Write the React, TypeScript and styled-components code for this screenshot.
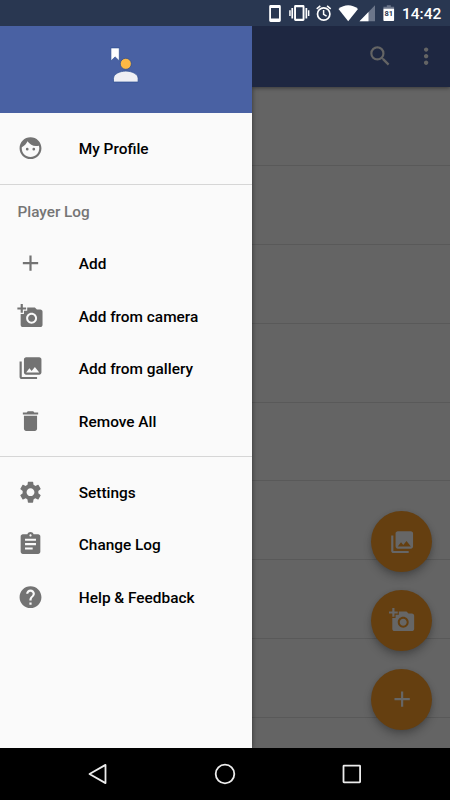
import React from 'react';
import styled, { createGlobalStyle } from 'styled-components';
import {
  MdFace,
  MdAdd,
  MdAddAPhoto,
  MdCollections,
  MdDelete,
  MdSettings,
  MdAssignment,
  MdHelp,
  MdSearch,
  MdMoreVert,
} from 'react-icons/md';

const GlobalStyle = createGlobalStyle`
  * { box-sizing: border-box; }
  body { margin: 0; background: #000; font-family: Roboto, "Liberation Sans", sans-serif; }
`;

const Device = styled.div`
  width: 450px;
  height: 800px;
  display: flex;
  flex-direction: column;
  overflow: hidden;
  background: #000;
`;

const StatusBar = styled.header`
  height: 26px;
  flex: none;
  background: #293751;
  color: #fff;
  display: flex;
  justify-content: flex-end;
  position: relative;
  z-index: 2;
`;

const StatusIcons = styled.svg`
  width: 134px;
  height: 26px;
  flex: none;
`;

const BatteryLevel = styled.text`
  font: 700 7.5px Roboto, sans-serif;
  fill: #293751;
`;

const Clock = styled.time`
  width: 48px;
  font-size: 15.5px;
  font-weight: 500;
  line-height: 28px;
`;

const Screen = styled.main`
  height: 722px;
  flex: none;
  display: flex;
`;

const Drawer = styled.nav`
  width: 252px;
  flex: none;
  background: #fafafa;
  z-index: 1;
  box-shadow: 0 0 5px rgba(0, 0, 0, 0.5);
`;

const DrawerHeader = styled.div`
  height: 87.45px;
  background: #4961a3;
  padding: 18px 0 0 107px;
`;

const Logo = styled.svg`
  display: block;
  width: 36px;
  height: 44px;
`;

const Group = styled.ul`
  list-style: none;
  margin: 0;
  padding: 8.85px 0 8.8px;

  & + & {
    border-top: 1px solid #d6d6d6;
  }
`;

const GroupTitle = styled.li`
  height: 52.5px;
  margin-top: -8.85px;
  padding-left: 17.5px;
  font-size: 15.3px;
  font-weight: 500;
  line-height: 54px;
  color: #757575;
`;

const MenuItem = styled.li`
  height: 52.5px;
  padding-left: 17px;
  display: flex;
  align-items: center;
  gap: 34.8px;
  font-size: 15.4px;
  font-weight: 500;
  color: #000;

  svg {
    width: 27px;
    height: 26.25px;
    flex: none;
    color: #737373;
  }
`;

const Label = styled.span`
  line-height: 20px;
  padding-top: 1.5px;
`;

const Content = styled.section`
  flex: 1;
  position: relative;
  display: flex;
  flex-direction: column;
  background: #646464;
  overflow: hidden;
`;

const AppBar = styled.div`
  height: 61px;
  flex: none;
  display: flex;
  align-items: center;
  justify-content: flex-end;
  gap: 20px;
  padding-right: 11px;
  background: #1e2741;
  color: #646464;
  box-shadow: 0 1px 4px rgba(0, 0, 0, 0.45);
  z-index: 1;

  svg {
    width: 26.25px;
    height: 26.25px;
  }
`;

const List = styled.div`
  padding-top: 0.7px;
`;

const ListRow = styled.div`
  height: 78.75px;
  border-bottom: 1px solid #595959;
`;

const Actions = styled.div`
  position: absolute;
  right: 17.6px;
  bottom: 18.2px;
  display: flex;
  flex-direction: column;
  gap: 17.5px;
`;

const ActionButton = styled.button`
  width: 61.25px;
  height: 61.25px;
  padding: 0;
  border: 0;
  border-radius: 50%;
  display: flex;
  align-items: center;
  justify-content: center;
  background: #653f10;
  color: #666;
  box-shadow: 0 5px 8px rgba(0, 0, 0, 0.24), 0 1px 4px rgba(0, 0, 0, 0.1);

  svg {
    width: 26.25px;
    height: 26.25px;
  }
`;

const NavBar = styled.footer`
  height: 52px;
  flex: none;
  display: flex;
  align-items: center;
  justify-content: center;
  gap: 101px;
  background: #000;
  position: relative;
  z-index: 2;

  svg {
    width: 26px;
    height: 26px;
    fill: none;
    stroke: #ececec;
    stroke-width: 1.8;
    stroke-linejoin: round;
  }
`;

const menu = [
  { items: [{ label: 'My Profile', Icon: MdFace }] },
  {
    title: 'Player Log',
    items: [
      { label: 'Add', Icon: MdAdd },
      { label: 'Add from camera', Icon: MdAddAPhoto },
      { label: 'Add from gallery', Icon: MdCollections },
      { label: 'Remove All', Icon: MdDelete },
    ],
  },
  {
    items: [
      { label: 'Settings', Icon: MdSettings },
      { label: 'Change Log', Icon: MdAssignment },
      { label: 'Help & Feedback', Icon: MdHelp },
    ],
  },
];

const actions = [
  { label: 'Add from gallery', Icon: MdCollections },
  { label: 'Add from camera', Icon: MdAddAPhoto },
  { label: 'Add', Icon: MdAdd },
];

function StatusGlyphs() {
  return (
    <StatusIcons viewBox="268 0 134 26" fill="#fff">
      <path
        fillRule="evenodd"
        d="M270.6 5h8.8q1.4 0 1.4 1.4v14.2q0 1.4-1.4 1.4h-8.8q-1.4 0-1.4-1.4V6.4q0-1.4 1.4-1.4zM271 8v10.5h8V8z"
      />
      <path
        fillRule="evenodd"
        d="M295.5 5h7.6q1.4 0 1.4 1.4v13.2q0 1.4-1.4 1.4h-7.6q-1.4 0-1.4-1.4V6.4q0-1.4 1.4-1.4zM296 7.2v11.6h6.6V7.2z"
      />
      <path d="M291.4 8h1.7v10.5h-1.7zM289.2 10.3h1.5v5.6h-1.5zM305.5 8h1.7v10.5h-1.7zM307.9 10.3h1.5v5.6h-1.5z" />
      <circle cx="323.7" cy="14" r="6.2" fill="none" stroke="#fff" strokeWidth="1.7" />
      <path d="M316.7 8.9l3.6-3M330.7 8.9l-3.6-3M323.6 10v4.3l3 1.9" fill="none" stroke="#fff" strokeWidth="1.5" />
      <path d="M348.2 21.2L338.5 8.9Q343 5.2 348.2 5.2T358 8.9z" />
      <path d="M375 5.3v15.9h-15.5z" fill="#6c768a" />
      <path d="M368.5 11.9v9.3h-9z" />
      <path d="M386.8 5.2h4v1.5h3.3V9h-10.7V6.7h3.4z" fill="#6c768a" />
      <path d="M383.4 8.8h10.7v11.4q0 .8-.8.8h-9.1q-.8 0-.8-.8z" />
      <BatteryLevel x="388.8" y="15.8" textAnchor="middle">81</BatteryLevel>
    </StatusIcons>
  );
}

function ProfileLogo() {
  return (
    <Logo viewBox="107 44 36 44" stroke="#2a4b8e" strokeWidth="0.7">
      <path d="M110.9 47.9h8.4v13l-4.2-4-4.2 4z" fill="#fff" />
      <circle cx="125.8" cy="63.8" r="5.5" fill="#fdb945" />
      <path d="M113.5 82v-3.5c0-4.6 6.5-7.4 12.3-7.4s12.3 2.8 12.3 7.4V82z" fill="#efeff4" />
    </Logo>
  );
}

export default function App() {
  return (
    <>
      <GlobalStyle />
      <Device>
        <StatusBar>
          <StatusGlyphs />
          <Clock>14:42</Clock>
        </StatusBar>
        <Screen>
          <Drawer>
            <DrawerHeader>
              <ProfileLogo />
            </DrawerHeader>
            {menu.map(({ title, items }, index) => (
              <Group key={index}>
                {title && <GroupTitle>{title}</GroupTitle>}
                {items.map(({ label, Icon }) => (
                  <MenuItem key={label}>
                    <Icon />
                    <Label>{label}</Label>
                  </MenuItem>
                ))}
              </Group>
            ))}
          </Drawer>
          <Content>
            <AppBar>
              <MdSearch />
              <MdMoreVert />
            </AppBar>
            <List>
              {Array.from({ length: 8 }, (_, row) => (
                <ListRow key={row} />
              ))}
            </List>
            <Actions>
              {actions.map(({ label, Icon }) => (
                <ActionButton key={label} aria-label={label}>
                  <Icon />
                </ActionButton>
              ))}
            </Actions>
          </Content>
        </Screen>
        <NavBar>
          <svg viewBox="0 0 26 26"><path d="M20.5 3.9v18.2L4.5 13z" /></svg>
          <svg viewBox="0 0 26 26"><circle cx="13" cy="13" r="9.3" /></svg>
          <svg viewBox="0 0 26 26"><rect x="4.5" y="4.7" width="16.6" height="16.6" rx="0.5" /></svg>
        </NavBar>
      </Device>
    </>
  );
}
